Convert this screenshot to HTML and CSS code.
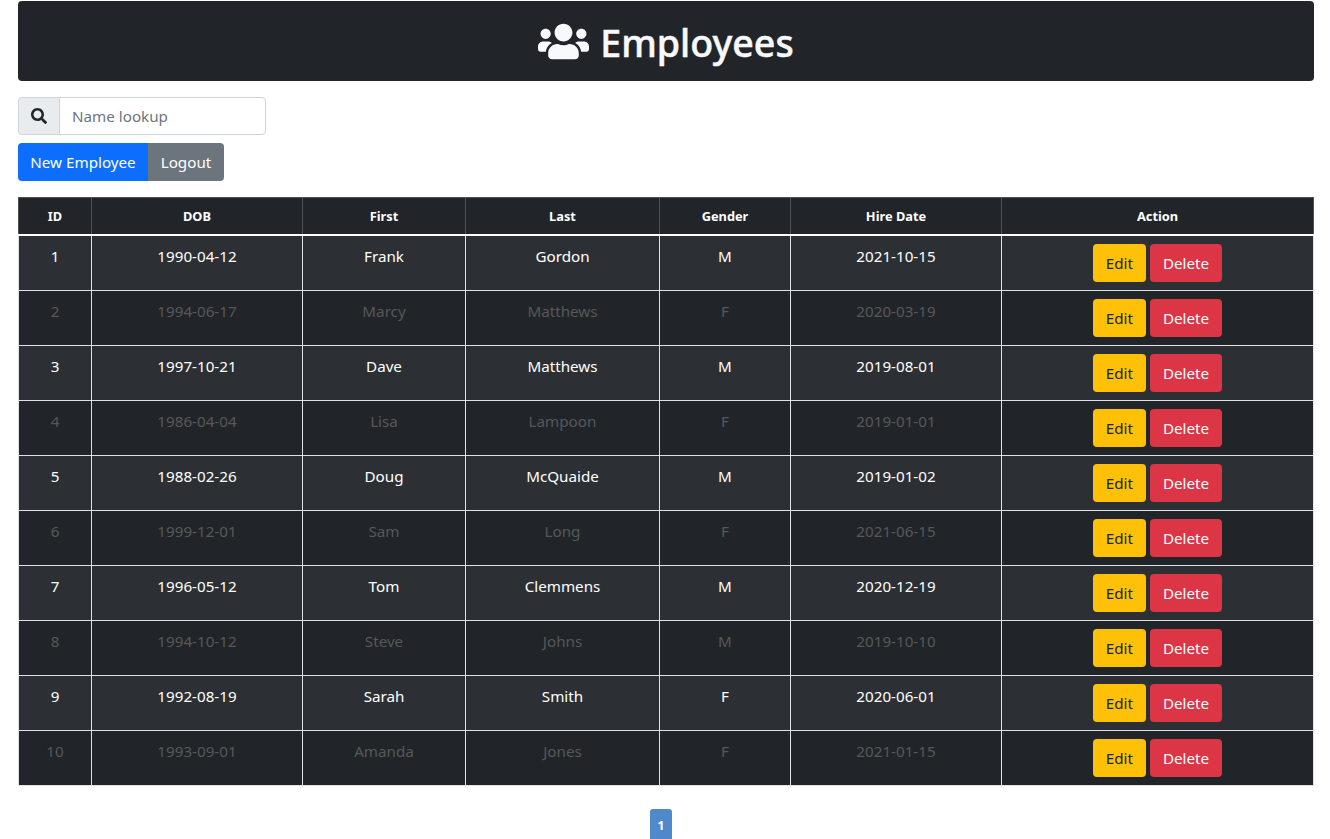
FILE: index.html
```html
<!DOCTYPE html>
<html lang="en">
<head>
	<meta charset="UTF-8">
	<title>Employees</title>
	<link rel="stylesheet" href="styles.css">
</head>
<body>
	<header class="banner">
		<svg class="banner-icon" viewBox="0 0 640 512"><path fill="currentColor" d="M96 224c35.300 0 64-28.700 64-64s-28.700-64-64-64-64 28.700-64 64 28.700 64 64 64zm448 0c35.300 0 64-28.700 64-64s-28.700-64-64-64-64 28.700-64 64 28.700 64 64 64zm32 32h-64c-17.600 0-33.500 7.100-45.100 18.600 40.300 22.100 68.900 62 75.100 109.400h66c17.700 0 32-14.300 32-32v-32c0-35.300-28.700-64-64-64zm-256 0c61.900 0 112-50.100 112-112S381.900 32 320 32 208 82.100 208 144s50.100 112 112 112zm76.800 32h-8.300c-20.800 10-43.900 16-68.500 16s-47.600-6-68.500-16h-8.300C179.600 288 128 339.600 128 403.200V432c0 26.500 21.500 48 48 48h288c26.500 0 48-21.500 48-48v-28.800c0-63.600-51.600-115.200-115.200-115.200zm-223.700-13.400C161.500 263.100 145.600 256 128 256H64c-35.300 0-64 28.700-64 64v32c0 17.700 14.300 32 32 32h65.900c6.300-47.400 34.900-87.300 75.200-109.400z"/></svg>
		<h1 class="banner-title">Employees</h1>
	</header>

	<div class="lookup">
		<span class="lookup-addon">
			<svg class="lookup-icon" viewBox="0 0 512 512"><path fill="currentColor" d="M505 442.700L405.300 343c-4.500-4.500-10.600-7-17-7H372c27.600-35.300 44-79.700 44-128C416 93.100 322.900 0 208 0S0 93.100 0 208s93.100 208 208 208c48.300 0 92.700-16.400 128-44v16.300c0 6.400 2.500 12.500 7 17l99.700 99.700c9.400 9.400 24.600 9.400 33.900 0l28.300-28.300c9.400-9.400 9.400-24.600.1-34zM208 336c-70.700 0-128-57.200-128-128 0-70.700 57.200-128 128-128 70.700 0 128 57.200 128 128 0 70.700-57.200 128-128 128z"/></svg>
		</span>
		<input class="lookup-input" type="text" placeholder="Name lookup">
	</div>

	<div class="btn-group">
		<button class="btn btn-blue">New Employee</button>
		<button class="btn btn-grey">Logout</button>
	</div>

	<table class="staff">
		<colgroup>
			<col class="col-id"><col class="col-dob"><col class="col-first"><col class="col-last"><col class="col-gender"><col class="col-hire"><col class="col-action">
		</colgroup>
		<thead>
			<tr><th>ID</th><th>DOB</th><th>First</th><th>Last</th><th>Gender</th><th>Hire Date</th><th>Action</th></tr>
		</thead>
		<tbody>
			<tr><td>1</td><td>1990-04-12</td><td>Frank</td><td>Gordon</td><td>M</td><td>2021-10-15</td><td><button class="btn btn-yellow">Edit</button> <button class="btn btn-red">Delete</button></td></tr>
			<tr><td>2</td><td>1994-06-17</td><td>Marcy</td><td>Matthews</td><td>F</td><td>2020-03-19</td><td><button class="btn btn-yellow">Edit</button> <button class="btn btn-red">Delete</button></td></tr>
			<tr><td>3</td><td>1997-10-21</td><td>Dave</td><td>Matthews</td><td>M</td><td>2019-08-01</td><td><button class="btn btn-yellow">Edit</button> <button class="btn btn-red">Delete</button></td></tr>
			<tr><td>4</td><td>1986-04-04</td><td>Lisa</td><td>Lampoon</td><td>F</td><td>2019-01-01</td><td><button class="btn btn-yellow">Edit</button> <button class="btn btn-red">Delete</button></td></tr>
			<tr><td>5</td><td>1988-02-26</td><td>Doug</td><td>McQuaide</td><td>M</td><td>2019-01-02</td><td><button class="btn btn-yellow">Edit</button> <button class="btn btn-red">Delete</button></td></tr>
			<tr><td>6</td><td>1999-12-01</td><td>Sam</td><td>Long</td><td>F</td><td>2021-06-15</td><td><button class="btn btn-yellow">Edit</button> <button class="btn btn-red">Delete</button></td></tr>
			<tr><td>7</td><td>1996-05-12</td><td>Tom</td><td>Clemmens</td><td>M</td><td>2020-12-19</td><td><button class="btn btn-yellow">Edit</button> <button class="btn btn-red">Delete</button></td></tr>
			<tr><td>8</td><td>1994-10-12</td><td>Steve</td><td>Johns</td><td>M</td><td>2019-10-10</td><td><button class="btn btn-yellow">Edit</button> <button class="btn btn-red">Delete</button></td></tr>
			<tr><td>9</td><td>1992-08-19</td><td>Sarah</td><td>Smith</td><td>F</td><td>2020-06-01</td><td><button class="btn btn-yellow">Edit</button> <button class="btn btn-red">Delete</button></td></tr>
			<tr><td>10</td><td>1993-09-01</td><td>Amanda</td><td>Jones</td><td>F</td><td>2021-01-15</td><td><button class="btn btn-yellow">Edit</button> <button class="btn btn-red">Delete</button></td></tr>
		</tbody>
	</table>

	<nav class="pager"><a class="pager-item">1</a></nav>
</body>
</html>
```

FILE: styles.css
```css
* {
	box-sizing: border-box;
}

html, body {
	height: 839px;
	overflow: hidden;
}

body {
	margin: 0;
	padding: 1px 16px 0 18px;
	font-family: "Noto Sans", "Open Sans", sans-serif;
	font-size: 15.2px;
	line-height: 24px;
	color: #212529;
	background-color: #fff;
}

.banner {
	display: flex;
	justify-content: center;
	align-items: center;
	gap: 11px;
	height: 80px;
	background-color: #212529;
	color: #f8f9fa;
	border-radius: 4px;
}

.banner-icon {
	width: 51px;
	height: 41px;
}

.banner-title {
	margin: 2px 0 0;
	font-size: 37.6px;
	font-weight: 500;
	line-height: 43px;
	-webkit-text-stroke: 0.5px #f8f9fa;
}

.lookup {
	display: flex;
	width: 248px;
	height: 38px;
	margin-top: 16px;
}

.lookup-addon {
	display: flex;
	align-items: center;
	justify-content: center;
	width: 42px;
	background-color: #e9ecef;
	border: 1px solid #ced4da;
	border-radius: 4px 0 0 4px;
	color: #212529;
}

.lookup-icon {
	width: 16px;
	height: 16px;
}

.lookup-input {
	flex: 1;
	min-width: 0;
	margin-left: -1px;
	padding: 6px 12px;
	font: inherit;
	border: 1px solid #ced4da;
	border-radius: 0 4px 4px 0;
}

.lookup-input::placeholder {
	color: #6c757d;
}

.btn-group {
	display: flex;
	margin-top: 8px;
}

.btn {
	height: 38px;
	padding: 6px 12px;
	font: inherit;
	border: 1px solid transparent;
	border-radius: 4px;
}

.btn-group .btn:first-child {
	width: 130px;
	padding: 6px 0;
	border-radius: 4px 0 0 4px;
}

.btn-group .btn:last-child {
	width: 76px;
	padding: 6px 0;
	border-radius: 0 4px 4px 0;
}

.btn-blue {
	background-color: #0d6efd;
	color: #fff;
}

.btn-grey {
	background-color: #6c757d;
	color: #fff;
}

.btn-yellow {
	background-color: #ffc107;
	color: #212529;
}

.btn-red {
	background-color: #dc3545;
	color: #fff;
}

.staff {
	width: 1295px;
	margin-top: 16px;
	table-layout: fixed;
	border-collapse: collapse;
	color: #fff;
	text-align: center;
}

.col-id { width: 73px; }
.col-dob { width: 211px; }
.col-first { width: 163px; }
.col-last { width: 194px; }
.col-gender { width: 131px; }
.col-hire { width: 211px; }
.col-action { width: 312px; }

.staff th {
	height: 36px;
	padding: 8px;
	font-size: 12.8px;
	font-weight: 700;
	line-height: 20px;
	background-color: #212529;
	border: 1px solid #4d5154;
	border-bottom: 2px solid #fff;
}

.staff td {
	height: 55px;
	padding: 8px;
	vertical-align: top;
	border: 1px solid #dee2e6;
}

.staff tbody tr:nth-child(odd) td {
	background-color: #2c3034;
}

.staff tbody tr:nth-child(even) td {
	background-color: #212529;
	color: #565859;
}

.pager {
	display: flex;
	justify-content: center;
	margin-top: 23px;
	padding-right: 10px;
}

.pager-item {
	width: 22px;
	height: 40px;
	padding-top: 5px;
	font-size: 12px;
	font-weight: 700;
	text-align: center;
	color: #fff;
	background-color: #5088cc;
	border-radius: 3px;
}
```
